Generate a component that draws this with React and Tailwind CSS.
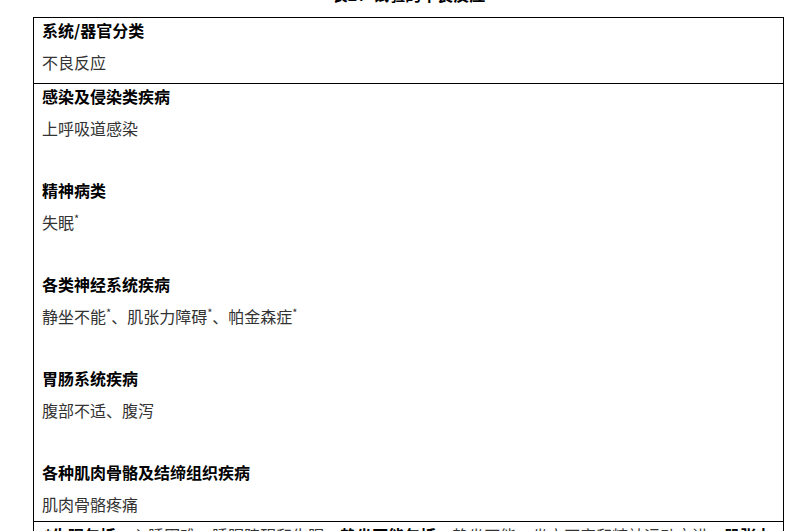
import React from "react";

const font = { fontFamily: '"Noto Sans CJK SC", "Noto Sans", sans-serif' };

function Star() {
  return <span className="text-[11px] align-super leading-none">*</span>;
}

const groups = [
  { head: "感染及侵染类疾病", item: <>上呼吸道感染</> },
  { head: "精神病类", item: <>失眠<Star /></> },
  {
    head: "各类神经系统疾病",
    item: (
      <>
        静坐不能<Star />、肌张力障碍<Star />、帕金森症<Star />
      </>
    ),
  },
  { head: "胃肠系统疾病", item: <>腹部不适、腹泻</> },
  { head: "各种肌肉骨骼及结缔组织疾病", item: <>肌肉骨骼疼痛</> },
];

export default function App() {
  return (
    <div className="bg-white w-[804px] min-h-[531px] text-[16px]" style={font}>
      <div className="ml-[33px] w-[751px] flex flex-col">
        <div className="h-[17px] overflow-hidden flex flex-col justify-end">
          <div className="leading-[24px] pb-[11px] text-center font-bold text-black whitespace-nowrap">
            表2：试验的不良反应
          </div>
        </div>
        <div className="border border-black">
          <div className="pl-[8px] pb-[9px] border-b border-black">
            <div className="leading-[24px] font-bold text-black">系统/器官分类</div>
            <div className="leading-[24px] mt-[8px] text-[#333]">不良反应</div>
          </div>
          <div className="pl-[8px] pb-[5px] border-b border-black flex flex-col gap-[38px]">
            {groups.map((g) => (
              <div key={g.head}>
                <div className="leading-[24px] font-bold text-black">{g.head}</div>
                <div className="leading-[24px] mt-[8px] text-[#333]">{g.item}</div>
              </div>
            ))}
          </div>
          <div className="pl-[10px] pr-[4px] pt-[1px] leading-[24px] text-[#333]">
            <span className="font-bold text-black">*失眠包括</span>
            ：入睡困难、睡眠障碍和失眠。
            <span className="font-bold text-black">静坐不能包括</span>
            ：静坐不能、坐立不安和精神运动亢进。
            <span className="font-bold text-black">肌张力障碍包括</span>
            ：肌张力障碍、肌肉痉挛和牙关紧闭。
          </div>
        </div>
      </div>
    </div>
  );
}
